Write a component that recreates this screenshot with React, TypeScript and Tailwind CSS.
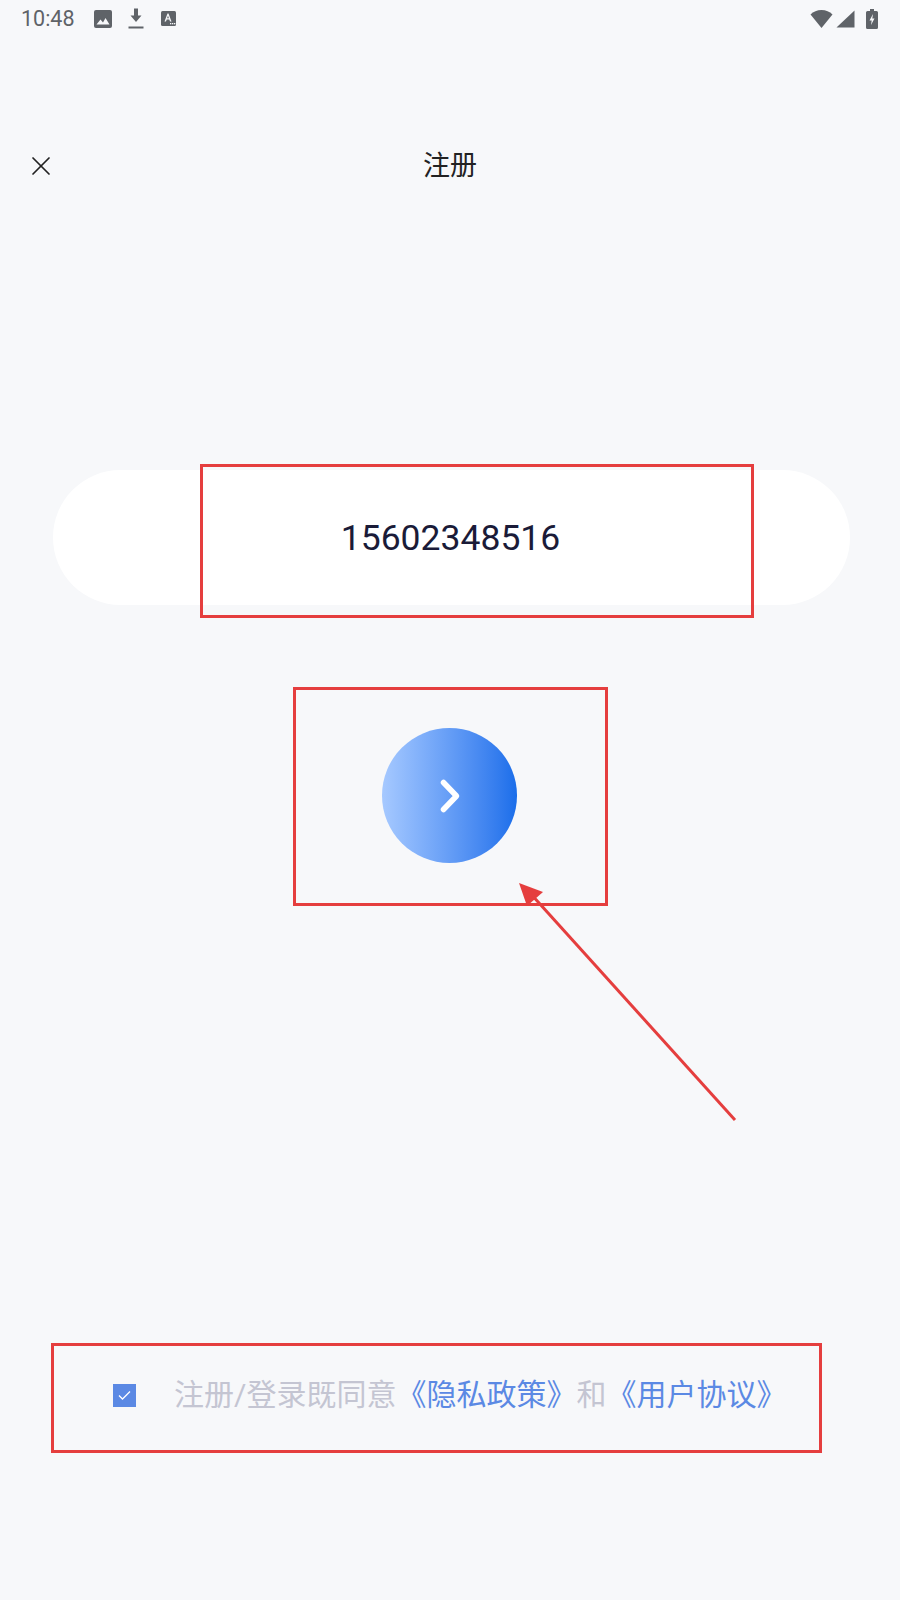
import { X } from "lucide-react";

const cjk = "font-['Roboto','Noto_Sans_CJK_SC',sans-serif]";

function StatusBar() {
  return (
    <div className="flex h-[37px] items-center pl-[21px] pr-[22px] text-[#5f6368]">
      <span className="w-[73px] font-['Roboto',sans-serif] text-[21.500px] leading-none">10:48</span>
      {/* image */}
      <svg width="18" height="18" viewBox="0 0 18 18">
        <rect width="18" height="18" rx="2" fill="#5f6368" />
        <path d="M2.5 14.5 6.5 9.5 9 12.5 11.5 8 15.5 14.5Z" fill="#f7f8fa" />
      </svg>
      {/* download */}
      <svg className="ml-[16px]" width="16" height="21" viewBox="0 0 16 21">
        <path d="M6 0.500h4v7h3.500L8 14 2.500 7.500H6Z" fill="#5f6368" />
        <rect x="0.500" y="18.500" width="15" height="2" fill="#5f6368" />
      </svg>
      {/* keyboard badge */}
      <svg className="ml-[17px]" width="15" height="15" viewBox="0 0 15 15">
        <rect width="15" height="15" rx="1.500" fill="#5f6368" />
        <path d="M3.500 10.500 6.500 2.500H7.500L10.500 10.500H9L8.300 8.500H5.700L5 10.500ZM6.100 7.300H7.900L7 4.700Z" fill="#f7f8fa" fillRule="evenodd" />
        <rect x="9" y="12" width="1.300" height="1.300" fill="#f7f8fa" />
        <rect x="11" y="12" width="1.300" height="1.300" fill="#f7f8fa" />
        <rect x="13" y="12" width="1.300" height="1.300" fill="#f7f8fa" />
      </svg>
      <div className="ml-auto flex items-center">
        <svg width="23" height="18" viewBox="0 0 23 18">
          <path d="M0.500 4.500C3.500 1.500 7 0 11.500 0S19.500 1.500 22.500 4.500L11.500 18Z" fill="#5f6368" />
        </svg>
        <svg className="ml-[3px] mt-[1px]" width="19" height="18" viewBox="0 0 19 18">
          <path d="M18.500 0.500V17.500H0.500Z" fill="#5f6368" />
        </svg>
        <svg className="ml-[11px]" width="12" height="20" viewBox="0 0 12 20">
          <path d="M4 0h4v2h2.500A1.500 1.500 0 0 1 12 3.500V18.500A1.500 1.500 0 0 1 10.500 20H1.500A1.500 1.500 0 0 1 0 18.500V3.500A1.500 1.500 0 0 1 1.500 2H4Z" fill="#5f6368" />
          <path d="M7 5 3.500 11.500H5.700L5 16 8.500 9.500H6.300Z" fill="#f7f8fa" />
        </svg>
      </div>
    </div>
  );
}

export default function App() {
  return (
    <div className="relative h-[1600px] w-[900px] overflow-hidden bg-[#f7f8fa]">
      <StatusBar />

      {/* Nav */}
      <div className="relative mt-[107px] flex h-[44px] items-center justify-center">
        <X className="absolute left-[25px] top-[6px] text-[#222222]" size={32} strokeWidth={1.3} />
        <span className={`${cjk} text-[27px] leading-none text-[#222222]`}>注册</span>
      </div>

      {/* Phone input */}
      <div className="ml-[53px] mt-[282px] flex h-[135px] w-[797px] items-center justify-center rounded-full bg-white pr-[2px] pt-[2px]">
        <span className="font-['Roboto',sans-serif] text-[35.500px] leading-none text-[#1a1b38]">15602348516</span>
      </div>

      {/* Next */}
      <div className="ml-[382px] mt-[123px] flex h-[135px] w-[135px] items-center justify-center rounded-full bg-gradient-to-r from-[#a6c9ff] to-[#1a6eea]">
        <svg width="28" height="40" viewBox="0 0 28 40" fill="none" stroke="#ffffff" strokeWidth="5.500" strokeLinecap="round" strokeLinejoin="round">
          <path d="M7.500 6.500 20.500 20 7.500 33.500" />
        </svg>
      </div>

      {/* Agreement */}
      <div className="ml-[113px] mt-[517px] flex h-[30px] items-center">
        <div className="flex h-[23px] w-[23px] items-center justify-center bg-[#5b89e4]">
          <svg width="15" height="12" viewBox="0 0 15 12" fill="none" stroke="#ffffff" strokeWidth="1.300">
            <path d="M2 6.500 5.500 10 13 2.500" />
          </svg>
        </div>
        <p className={`${cjk} ml-[38px] whitespace-nowrap text-[30px] leading-none text-[#c4c5d2]`}>
          注册/登录既同意<span className="text-[#5b89e4]">《隐私政策》</span>和<span className="text-[#5b89e4]">《用户协议》</span>
        </p>
      </div>

      {/* Annotations */}
      <div className="absolute left-[200px] top-[464px] h-[154px] w-[554px] border-[3px] border-[#e53e3e]" />
      <div className="absolute left-[293px] top-[687px] h-[219px] w-[315px] border-[3px] border-[#e53e3e]" />
      <div className="absolute left-[51px] top-[1343px] h-[110px] w-[771px] border-[3px] border-[#e53e3e]" />
      <svg className="absolute left-[510px] top-[875px]" width="240" height="250" viewBox="510 875 240 250">
        <path d="M735 1120 530 893" stroke="#e53e3e" strokeWidth="3" fill="none" />
        <path d="M519 883 543 892 527 906Z" fill="#e53e3e" />
      </svg>
    </div>
  );
}
